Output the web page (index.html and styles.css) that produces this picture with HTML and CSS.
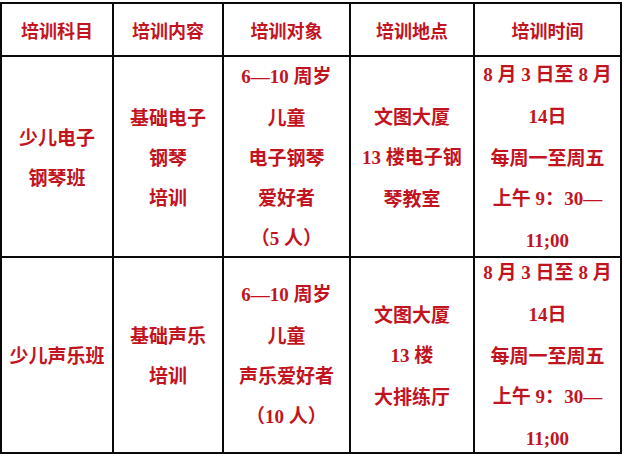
FILE: index.html
```html
<!DOCTYPE html>
<html lang="zh-CN">
<head>
<meta charset="utf-8">
<title>培训安排</title>
<link rel="stylesheet" href="styles.css">
</head>
<body>
<div class="sheet">
  <div class="cell head"><p class="txt">培训科目</p></div>
  <div class="cell head"><p class="txt">培训内容</p></div>
  <div class="cell head"><p class="txt">培训对象</p></div>
  <div class="cell head"><p class="txt">培训地点</p></div>
  <div class="cell head"><p class="txt">培训时间</p></div>

  <div class="cell"><p class="txt">少儿电子<br>钢琴班</p></div>
  <div class="cell"><p class="txt">基础电子<br>钢琴<br>培训</p></div>
  <div class="cell"><p class="txt"><span class="d">6—10 </span>周岁<br>儿童<br>电子钢琴<br>爱好者<br>（<span class="d">5 </span>人）</p></div>
  <div class="cell"><p class="txt">文图大厦<br><span class="d">13 </span>楼电子钢<br>琴教室</p></div>
  <div class="cell"><p class="txt"><span class="d">8 </span>月<span class="d"> 3 </span>日至<span class="d"> 8 </span>月<br><span class="d">14</span>日<br>每周一至周五<br>上午<span class="d"> 9</span>：<span class="d">30—</span><br><span class="d">11;00</span></p></div>

  <div class="cell"><p class="txt">少儿声乐班</p></div>
  <div class="cell"><p class="txt">基础声乐<br>培训</p></div>
  <div class="cell"><p class="txt"><span class="d">6—10 </span>周岁<br>儿童<br>声乐爱好者<br>（<span class="d">10 </span>人）</p></div>
  <div class="cell"><p class="txt">文图大厦<br><span class="d">13 </span>楼<br>大排练厅</p></div>
  <div class="cell"><p class="txt"><span class="d">8 </span>月<span class="d"> 3 </span>日至<span class="d"> 8 </span>月<br><span class="d">14</span>日<br>每周一至周五<br>上午<span class="d"> 9</span>：<span class="d">30—</span><br><span class="d">11;00</span></p></div>
</div>
</body>
</html>
```

FILE: styles.css
```css
html, body {
  margin: 0;
  padding: 0;
  background: #ffffff;
}

.sheet {
  margin-top: 2px;
  width: 622px;
  box-sizing: border-box;
  display: grid;
  grid-template-columns: 110px 108px 125px 122px 145px;
  grid-template-rows: 51px 199px 194px;
  gap: 2px;
  padding: 2px;
  background: #0a0a0a;
}

.cell {
  background: #ffffff;
  display: flex;
  flex-direction: column;
  justify-content: center;
  align-items: center;
  text-align: center;
  color: #c2141f;
  font-family: "Noto Sans CJK SC", sans-serif;
  font-weight: 700;
  font-size: 19px;
  line-height: 40px;
  white-space: nowrap;
}

.txt {
  margin: 0;
}

.head {
  font-size: 18px;
}

.d {
  font-family: "Liberation Serif", "Noto Sans CJK SC", serif;
  font-weight: 700;
}
```
